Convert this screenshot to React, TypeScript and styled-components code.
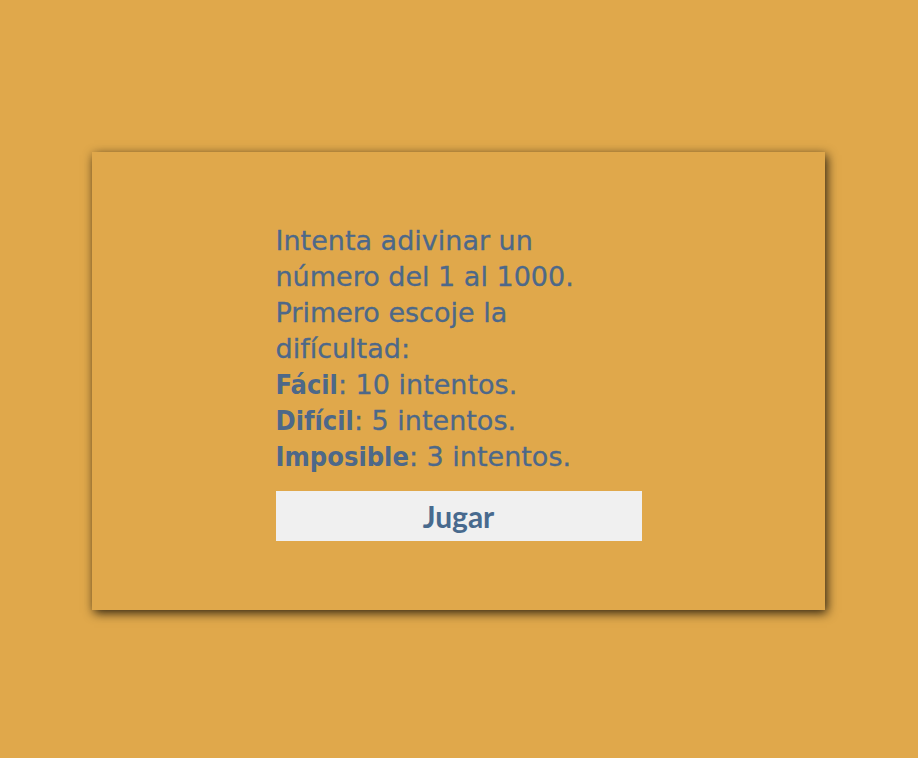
import React from "react";
import styled, { createGlobalStyle } from "styled-components";

const Global = createGlobalStyle`
  html, body { margin: 0; padding: 0; background: #e0a84b; }
  body { min-height: 758px; }
`;

const Page = styled.main`
  display: flex;
  justify-content: flex-start;
  padding: 152px 0 0 92px;
  min-height: 758px;
  box-sizing: border-box;
`;

const Card = styled.section`
  width: 733px;
  height: 458px;
  background: #e0a84b;
  box-shadow: 2px 3px 10px rgba(0, 0, 0, 0.8);
  display: flex;
  flex-direction: column;
  align-items: center;
  padding-top: 71px;
  box-sizing: border-box;
`;

const Column = styled.div`
  width: 366px;
  display: flex;
  flex-direction: column;
`;

const Text = styled.p`
  margin: 0;
  font-family: "DejaVu Sans", sans-serif;
  font-size: 27px;
  line-height: 36px;
  color: #4d6889;
  -webkit-text-stroke: 0.3px #4d6889;
`;

const Strong = styled.b`
  font-family: "DejaVu Sans Condensed", "DejaVu Sans", sans-serif;
  font-weight: 700;
  -webkit-text-stroke: 0;
`;

const Button = styled.button`
  margin-top: 16px;
  height: 50px;
  width: 100%;
  border: none;
  background: #f0f0f0;
  color: #486a8e;
  font-family: Lato, "Liberation Sans", sans-serif;
  font-size: 30px;
  font-weight: 700;
  padding: 0;
  cursor: pointer;
`;

export default function App() {
  return (
    <>
      <Global />
      <Page>
        <Card>
          <Column>
            <Text>
              Intenta adivinar un número del 1 al 1000. Primero escoje la difícultad:
              <br />
              <Strong>Fácil</Strong>: 10 intentos.
              <br />
              <Strong>Difícil</Strong>: 5 intentos.
              <br />
              <Strong>Imposible</Strong>: 3 intentos.
            </Text>
            <Button>Jugar</Button>
          </Column>
        </Card>
      </Page>
    </>
  );
}
